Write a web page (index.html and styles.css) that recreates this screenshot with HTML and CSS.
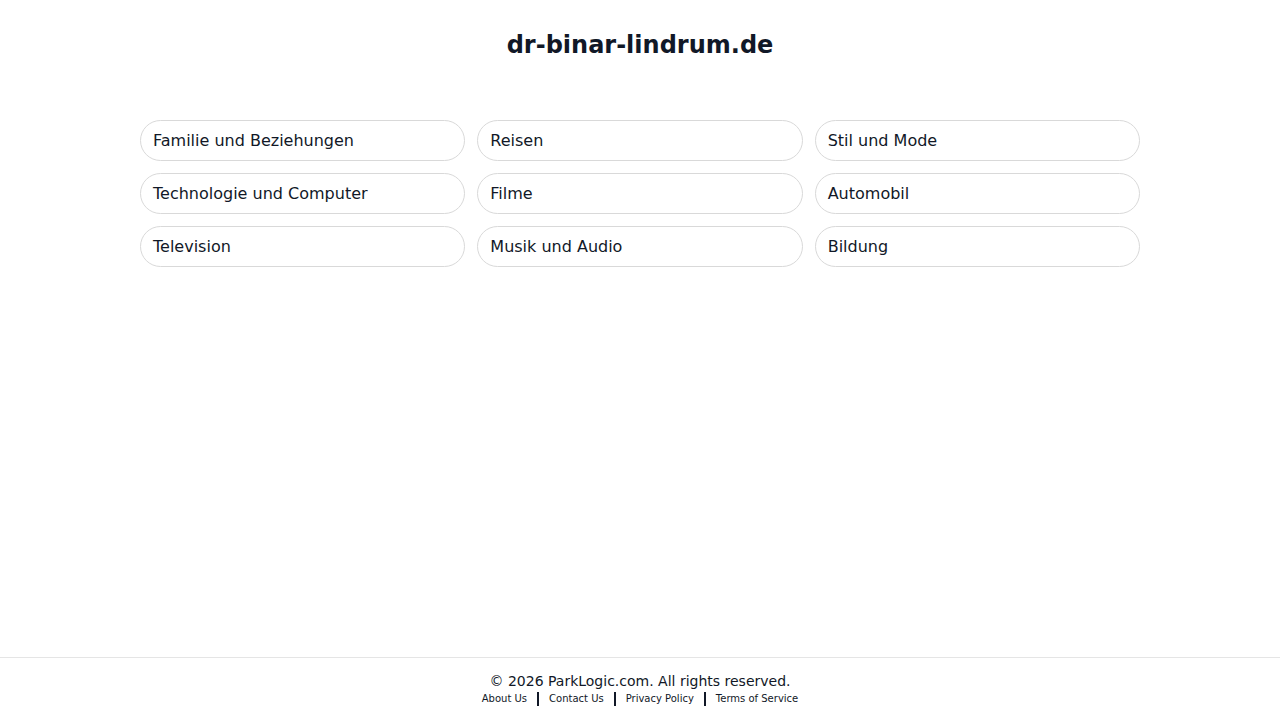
FILE: index.html
```html
<!DOCTYPE html>
<html lang="de">
  <head>
    <meta charset="UTF-8" />
    <meta name="viewport" content="width=device-width, initial-scale=1.0" />
    <title>dr-binar-lindrum.de</title>
    <link rel="stylesheet" href="styles.css">
  </head>
  <body>
    <div class="page">
      <main class="container">
        <h1>dr-binar-lindrum.de</h1>
        <div class="links">
          <a href="#" class="link">Familie und Beziehungen</a>
          <a href="#" class="link">Reisen</a>
          <a href="#" class="link">Stil und Mode</a>
          <a href="#" class="link">Technologie und Computer</a>
          <a href="#" class="link">Filme</a>
          <a href="#" class="link">Automobil</a>
          <a href="#" class="link">Television</a>
          <a href="#" class="link">Musik und Audio</a>
          <a href="#" class="link">Bildung</a>
        </div>
      </main>

      <footer class="footer">
        <p class="copy">&copy; 2026 ParkLogic.com. All rights reserved.</p>
        <nav class="footer-nav">
          <a href="#">About Us</a>
          <span class="sep"></span>
          <a href="#">Contact Us</a>
          <span class="sep"></span>
          <a href="#">Privacy Policy</a>
          <span class="sep"></span>
          <a href="#">Terms of Service</a>
        </nav>
      </footer>
    </div>
  </body>
</html>
```

FILE: styles.css
```css
* {
  box-sizing: border-box;
}
body {
  margin: 0;
  font-family: "DejaVu Sans", sans-serif;
  color: #111827;
  background: #fff;
}
.page {
  min-height: 100vh;
  display: flex;
  flex-direction: column;
}
.container {
  flex: 1;
  width: 1000px;
  margin: 0 auto;
}
h1 {
  margin: 31px 0 0;
  font-size: 24px;
  line-height: 28px;
  text-align: center;
}
.links {
  display: grid;
  grid-template-columns: repeat(3, 1fr);
  gap: 12px;
  margin-top: 61px;
}
.link {
  display: block;
  height: 41px;
  padding: 0 12px;
  border: 1px solid #d9d9d9;
  border-radius: 21px;
  font-size: 16px;
  line-height: 39px;
  color: #111827;
  text-decoration: none;
}
.link:hover {
  background-color: #f6f6f6;
}
.footer {
  border-top: 1px solid #e5e5e5;
  padding: 14px 0 13px;
  text-align: center;
}
.copy {
  margin: 0;
  font-size: 14px;
  line-height: 18px;
}
.footer-nav {
  display: flex;
  justify-content: center;
  align-items: center;
  gap: 10px;
  margin-top: 1px;
}
.footer-nav a {
  font-size: 10px;
  line-height: 16px;
  color: #111827;
  text-decoration: none;
}
.sep {
  width: 2px;
  height: 14px;
  background: #111827;
}
```
